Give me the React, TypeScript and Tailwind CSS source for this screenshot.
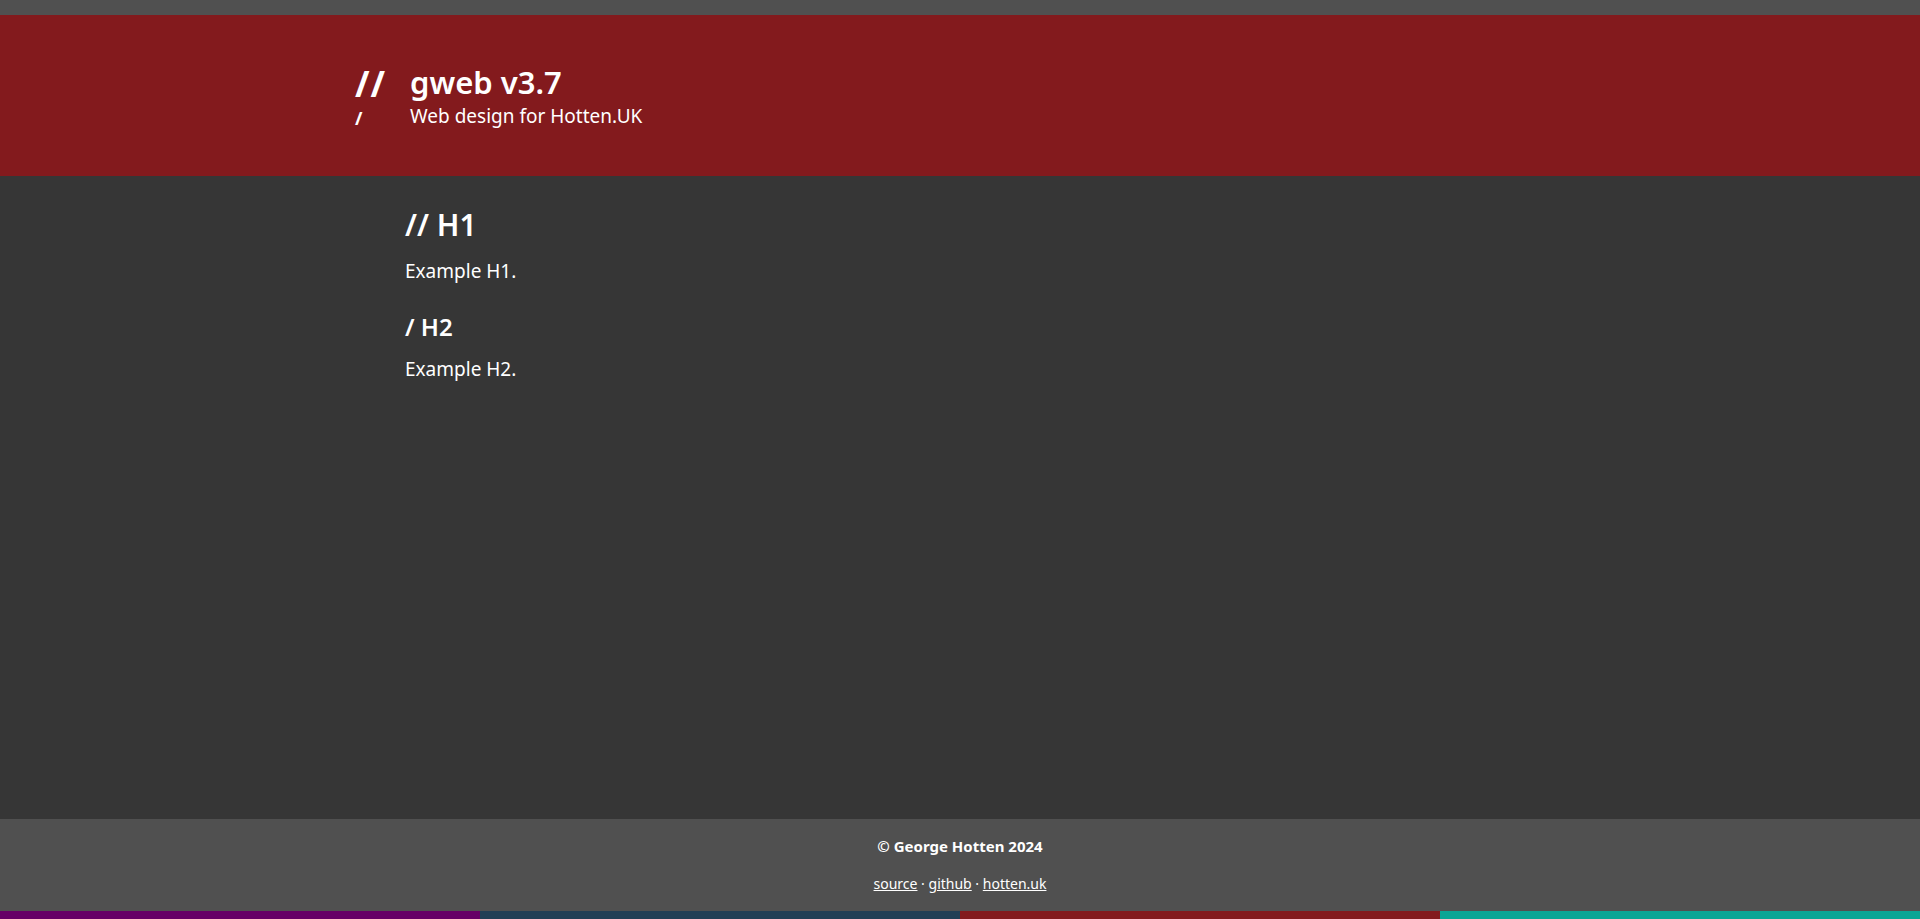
export default function App() {
    const links = ['source', 'github', 'hotten.uk']
    return (
        <div className="min-h-screen flex flex-col text-white" style={{ fontFamily: '"Noto Sans", "Open Sans", sans-serif' }}>
            <div className="h-[15px] bg-[#505050]"></div>
            <header className="h-[161px] bg-[#831a1d] flex items-center pl-[355px]">
                <div className="w-[55px] flex flex-col font-bold">
                    <span className="text-[35px] leading-[40px] tracking-[1px]">//</span>
                    <span className="text-[18px] leading-[20px] mt-[4px]">/</span>
                </div>
                <div className="flex flex-col">
                    <h1 className="text-[31px] leading-[40px] font-semibold">gweb v3.7</h1>
                    <p className="text-[19px] leading-[28px]">Web design for Hotten.UK</p>
                </div>
            </header>
            <main className="flex-1 bg-[#363636] pl-[405px] pt-[29px]">
                <h2 className="text-[30px] leading-[40px] font-semibold">// H1</h2>
                <p className="text-[19px] leading-[28px] mt-[12px]">Example H1.</p>
                <h3 className="text-[24px] leading-[32px] font-semibold mt-[26px]">/ H2</h3>
                <p className="text-[19px] leading-[28px] mt-[12px]">Example H2.</p>
            </main>
            <footer className="h-[92px] bg-[#505050] flex flex-col items-center pt-[17px]">
                <p className="text-[15px] leading-[20px] font-bold">© George Hotten 2024</p>
                <p className="text-[14px] leading-[20px] mt-[18px]">
                    {links.map((l, i) => (
                        <span key={l}>
                            {i > 0 && ' · '}
                            <a href="#" className="underline">{l}</a>
                        </span>
                    ))}
                </p>
            </footer>
            <div className="h-[8px] grid grid-cols-4">
                <div className="bg-[#660066]"></div>
                <div className="bg-[#223f55]"></div>
                <div className="bg-[#831a1d]"></div>
                <div className="bg-[#0aa595]"></div>
            </div>
        </div>
    )
}
